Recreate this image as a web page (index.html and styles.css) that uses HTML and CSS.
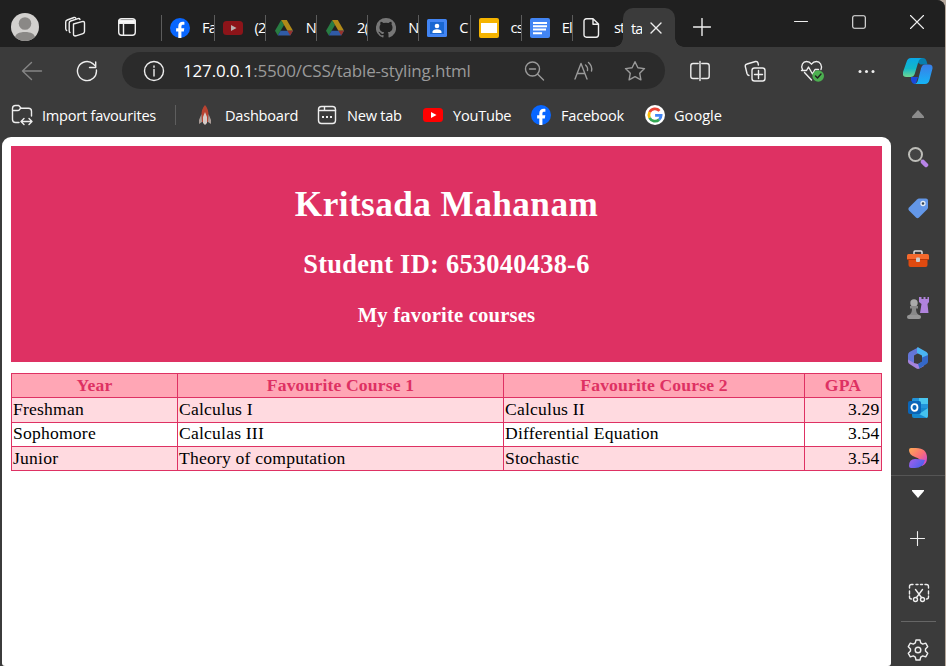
FILE: index.html
```html
<!DOCTYPE html>
<html lang="en">
<head>
<meta charset="utf-8">
<title>table-styling</title>
<link rel="stylesheet" href="styles.css">
</head>
<body>
<svg class="defs" width="0" height="0">
  <symbol id="facebook" viewBox="0 0 20 20"><circle cx="10" cy="10" r="10" fill="#0866ff"/><path d="M8.3 20v-6.600H6.100v-3.100h2.200V8.600c0-3.400 1.600-4.900 4.600-4.900.6 0 1.200.1 1.500.2v2.800h-1c-1.500 0-2 .6-2 2v1.600h2.900l-.5 3.100h-2.400V20z" fill="#fff"/></symbol>
  <symbol id="drive" viewBox="0 0 20 20"><path d="M7.200 2h5.600L10 7z" fill="#176b3a"/><path d="M7.200 2 1 12.800l2.800 4.700L10 7z" fill="#287c42"/><path d="M7.200 2h5.600L19 12.800h-5.600z" fill="#b18a18"/><path d="M6.600 12.800H19l-2.800 4.700H3.800z" fill="#305ba6"/><path d="M13.400 12.800H19l-2.800 4.700z" fill="#96332c"/></symbol>
</svg>
<div class="browser">
  <header class="tabstrip">
    <div class="tools-left">
      <svg class="avatar" viewBox="0 0 28 28"><clipPath id="face"><circle cx="14" cy="14" r="14"/></clipPath><g clip-path="url(#face)"><path fill="#d2d0ce" d="M0 0h28v28H0z"/><circle cx="14" cy="10.500" r="6.300" fill="#8a8886"/><path d="M4 28v-3c0-4 4-6 10-6s10 2 10 6v3z" fill="#8a8886"/></g></svg>
      <svg class="spaces line" viewBox="0 0 22 22"><path d="M9.500 8 18 5.600q2.500-.6 2.500 1.500v8.500q0 1.500-1.500 2l-7 2.200q-2.500.6-2.500-1.500zM6 16.500q-.8-.4-.8-2V7q0-1.400 1.500-2l7.300-2.400q1.500-.4 2 .8M2.700 14.500q-1-.5-1-2V6q0-1.500 1.500-2L10 1.500q1.200-.3 1.700.5"/></svg>
      <svg class="vtabs line" viewBox="0 0 20 20"><rect x="1.700" y="1.700" width="16.600" height="16.600" rx="3"/><path d="M2 3.500h16v2.800H2z" fill="#fff"/><path d="M6.500 6v12"/></svg>
    </div>
    <nav class="tabs">
      <div class="tab"><svg viewBox="0 0 20 20"><use href="#facebook"/></svg><span>Fa</span></div>
      <div class="tab"><svg viewBox="0 0 20 20"><rect y="3" width="20" height="14" rx="3.500" fill="#8c1419"/><path d="m8 7 5.500 3L8 13z" fill="#b9b0b0"/></svg><span>(2</span></div>
      <div class="tab"><svg viewBox="0 0 20 20"><use href="#drive"/></svg><span>N</span></div>
      <div class="tab"><svg viewBox="0 0 20 20"><use href="#drive"/></svg><span>2(</span></div>
      <div class="tab"><svg viewBox="0 0 20 20"><path fill="#777" d="M10 0a10 10 0 0 0-3.200 19.500c.5.1.7-.2.700-.5v-1.900c-2.600.5-3.300-.6-3.500-1.200-.2-.4-.7-1.200-1.100-1.500-.4-.2-.9-.7 0-.7.800 0 1.400.8 1.600 1.100 1 1.600 2.400 1.200 3 .9.1-.7.400-1.200.7-1.400-2.300-.3-4.700-1.200-4.700-5 0-1.100.4-2 1-2.700-.1-.3-.5-1.300.1-2.700 0 0 .9-.3 2.800 1.100a9.500 9.500 0 0 1 5.200 0C14.500 3.600 15.400 3.900 15.400 3.900c.6 1.400.2 2.400.1 2.700.6.700 1 1.600 1 2.700 0 3.900-2.400 4.700-4.700 5 .4.300.7.9.7 1.900V19c0 .3.200.6.700.5A10 10 0 0 0 10 0z"/></svg><span>N</span></div>
      <div class="tab"><svg viewBox="0 0 20 20"><rect y="1" width="20" height="18" rx="1.500" fill="#4285f4"/><rect x="3" y="4" width="14" height="12" fill="#1967d2"/><circle cx="10" cy="8" r="2.300" fill="#fff"/><path d="M5.500 15v-1.200c0-1.700 2-2.600 4.500-2.600s4.500.9 4.500 2.600V15z" fill="#fff"/></svg><span>C</span></div>
      <div class="tab"><svg viewBox="0 0 20 20"><rect width="20" height="20" rx="2" fill="#f5b400"/><path d="M2 5h16v10H2z" fill="#fff"/></svg><span>cs</span></div>
      <div class="tab"><svg viewBox="0 0 20 20"><rect width="20" height="20" rx="2" fill="#4285f4"/><path d="M3 4h14v2H3zm0 3.300h14v2H3zm0 3.300h13v2H3zm0 3.600h9v2H3z" fill="#fff"/></svg><span>El</span></div>
      <div class="tab last"><svg class="line" viewBox="0 0 20 20"><path d="M4.500.8H11l5.500 5.200v10.800q0 2.400-2.400 2.400H4.400Q2 19.200 2 16.800V3.200Q2 .8 4.500.8zM11 1v5.200h5"/></svg><span>st</span></div>
      <div class="tab-active"><span>ta</span><svg class="line" viewBox="0 0 12 12"><path d="m1 1 10 10M11 1 1 11"/></svg></div>
    </nav>
    <svg class="newtab line" viewBox="0 0 18 18"><path d="M9 .5v17M.5 9h17"/></svg>
    <div class="window-controls">
      <svg class="line thin" viewBox="0 0 14 14"><path d="M.5 6.500h13"/></svg>
      <svg class="line thin" viewBox="0 0 14 14"><rect x=".7" y=".7" width="12.600" height="12.600" rx="1.800"/></svg>
      <svg class="line thin" viewBox="0 0 14 14"><path d="m.5.5 13 13m0-13-13 13"/></svg>
    </div>
  </header>

  <div class="toolbar">
    <div class="tool"><svg class="line dim" viewBox="0 0 22 22"><path d="M20.500 11h-19M10.500 2.500 1.500 11l9 8.500"/></svg></div>
    <div class="tool"><svg class="line" viewBox="0 0 22 22"><path d="M20.400 10a9.500 9.500 0 1 1-3.200-6.100L19.500 6M13.500 7.500h6.200V2"/></svg></div>
    <div class="address">
      <svg class="line" viewBox="0 0 22 22"><circle cx="11" cy="11" r="9.500"/><path d="M11 9.500v6.500M11 6v1.200"/></svg>
      <span class="url"><b>127.0.0.1</b>:5500/CSS/table-styling.html</span>
      <svg class="line grey" viewBox="0 0 22 22"><circle cx="9.500" cy="9" r="7"/><path d="m14.500 14 6 6M6.500 9h6"/></svg>
      <svg class="line grey read" viewBox="0 0 22 22"><path d="m2 19 6-15.500L14 19M4.200 13.500h7.600M12.500 5q2.500 2 2 5.500M15.500 2.500q4 3.500 3 8.500"/></svg>
      <svg class="line grey" viewBox="0 0 22 22"><path d="m11 1.700 2.900 6 6.600.9-4.800 4.600 1.200 6.600-5.900-3.200-5.900 3.200 1.200-6.600-4.800-4.600 6.600-.9z"/></svg>
    </div>
    <div class="actions">
      <svg class="line" viewBox="0 0 22 22"><path d="M9.200 3.500H4Q1.800 3.500 1.800 5.700v10.600Q1.800 18.500 4 18.500h5.200M12.800 3.500H18q2.200 0 2.200 2.200v10.600q0 2.200-2.200 2.200h-5.200M11 1.500v19"/></svg>
      <svg class="line" viewBox="0 0 22 22"><rect x="8" y="8" width="13" height="13" rx="2.500"/><path d="M14.500 10.500v8M10.500 14.500h8M5 15.500q-1.500-.2-2-2L1.300 6.500Q1 4.500 3 4l8.500-2.500q2-.4 2.500 1.500l.4 2"/></svg>
      <svg class="line" viewBox="0 0 24 24"><path d="M2.500 10.500C.5 6.500 3 2.500 6.500 2.500q3 0 5 2.700 2-2.700 5-2.700c3.500 0 6 4 4.500 8M4.500 13.500 11.500 21M1.500 11.500h5L8.500 8l4 7 2.500-4.500h3.500"/><circle cx="18.200" cy="17" r="5.800" fill="#4caf50" stroke="none"/><path d="m15.500 17 2 2 3.500-4" stroke="#202020"/></svg>
      <svg viewBox="0 0 20 20" fill="#eee"><circle cx="3" cy="10.500" r="1.500"/><circle cx="9.500" cy="10.500" r="1.500"/><circle cx="16" cy="10.500" r="1.500"/></svg>
    </div>
    <svg class="copilot" viewBox="0 0 30 28"><defs><linearGradient id="cp1" x2="0" y2="1"><stop stop-color="#0aa7e6"/><stop offset=".55" stop-color="#12b8c8"/><stop offset="1" stop-color="#70d790"/></linearGradient><linearGradient id="cp2" x2="0" y2="1"><stop stop-color="#3b7de8"/><stop offset="1" stop-color="#15b4f6"/></linearGradient></defs><path d="M15 1h5q2.500 0 3.500 3l1 3.500h-7L14 5z" fill="#087fae"/><path d="M8 20h7l-1 3q-1 4-2 4-3 0-4-4z" fill="#1a48dc"/><path d="M8 1h12q-3.500 0-4.700 4l-3.600 12q-1 3-4.200 3H3q-4 0-3-5L3.500 5q1-4 4.500-4z" fill="url(#cp1)"/><path d="M22 7.500h4q4 0 3.500 4L26.500 23q-1 4-4.500 4H11q3 0 4-4l3-11.500q1-4 4-4z" fill="url(#cp2)"/></svg>
  </div>

  <div class="workspace">
    <main class="content">
      <nav class="bookmarks">
        <a class="import"><svg class="line" viewBox="0 0 22 22"><path d="M8 18.500H4.500Q1.500 18.500 1.500 15.500V4.500q0-3 3-3h3.200l2.500 2.700h7.300q3 0 3 3V12M1.500 6.500h5q1.500 0 2.200-1.200l1-1.100M10.500 17.500h10M13 14.500l-3 3 3 3M18 14.500l3 3-3 3"/></svg><span>Import favourites</span></a>
        <a class="dashboard"><svg viewBox="0 0 20 20"><path d="M10 0q4 4 3.500 12v5h-7v-5Q6 4 10 0z" fill="#b94331"/><path d="m6.500 9-2.500 6v4l3-2zm7 0 2.500 6v4l-3-2z" fill="#a99c97"/><path d="m10 7 2 5v6l-2 2-2-2v-6z" fill="#d6cbc7"/></svg><span>Dashboard</span></a>
        <a class="new"><svg class="line" viewBox="0 0 20 20"><rect x="1.500" y="1.500" width="17" height="17" rx="3"/><path d="M2 5.500h5.500V2M7.500 5.500h11"/><path d="M5 11h2v2H5zm4 0h2v2H9zm4 0h2v2h-2z" fill="#eee" stroke="none"/></svg><span>New tab</span></a>
        <a class="youtube"><svg viewBox="0 0 20 20"><rect y="3" width="20" height="14" rx="3.500" fill="#f00"/><path d="m8 7 5.500 3L8 13z" fill="#fff"/></svg><span>YouTube</span></a>
        <a class="fb"><svg viewBox="0 0 20 20"><use href="#facebook"/></svg><span>Facebook</span></a>
        <a class="google"><svg viewBox="0 0 20 20"><circle cx="10" cy="10" r="10" fill="#fff"/><g fill="none" stroke-width="2.800"><path d="M14.500 5.900A6.100 6.100 0 0 0 4.600 7.200" stroke="#ea4335"/><path d="M4.600 7.200a6.100 6.100 0 0 0 0 5.600" stroke="#fbbc05"/><path d="M4.600 12.800a6.100 6.100 0 0 0 9.500 1.800" stroke="#34a853"/><path d="M14.100 14.600q2-1.600 2-4.300h-6" stroke="#4285f4"/></g></svg><span>Google</span></a>
      </nav>
      <article class="page">
        <section class="banner">
          <h1>Kritsada Mahanam</h1>
          <h2>Student ID: 653040438-6</h2>
          <h3>My favorite courses</h3>
        </section>
        <table>
          <colgroup><col class="c-year"><col class="c-one"><col class="c-two"><col></colgroup>
          <thead><tr><th>Year</th><th>Favourite Course 1</th><th>Favourite Course 2</th><th>GPA</th></tr></thead>
          <tbody>
            <tr><td>Freshman</td><td>Calculus I</td><td>Calculus II</td><td>3.29</td></tr>
            <tr><td>Sophomore</td><td>Calculas III</td><td>Differential Equation</td><td>3.54</td></tr>
            <tr><td>Junior</td><td>Theory of computation</td><td>Stochastic</td><td>3.54</td></tr>
          </tbody>
        </table>
      </article>
    </main>

    <aside class="sidebar">
      <div class="cell up"><svg viewBox="0 0 12 8"><path d="M6 0 12 6.500V8H0V6.500z" fill="#8c8c8c"/></svg></div>
      <div class="apps">
        <div class="cell"><svg viewBox="0 0 22 22"><path d="m14 14 2.500 2.500" stroke="#999" stroke-width="2"/><path d="m16 16 3 3" stroke="#b884e8" stroke-width="4.500" stroke-linecap="round"/><circle cx="8.500" cy="8.500" r="6.500" fill="#444" stroke="#bdbdb8" stroke-width="2"/></svg></div>
        <div class="cell"><svg viewBox="0 0 22 22"><path d="M12 1.500h7q2 0 2 2v7q0 1-1 2l-8 8q-1.500 1.500-3 0l-7-7q-1.500-1.500 0-3l8-8q1-1 2-1z" fill="#6397e8"/><circle cx="16" cy="6.500" r="2" fill="#345" stroke="#e8eef5" stroke-width="1.300"/></svg></div>
        <div class="cell"><svg viewBox="0 0 22 22"><path d="M7 7V4q0-1 1-1h6q1 0 1 1v3" fill="none" stroke="#ddd" stroke-width="1.500"/><path d="M1.500 10h19v7q0 2-2 2h-15q-2 0-2-2z" fill="#df4a10"/><rect y="6" width="22" height="6" rx="1.500" fill="#f4692c"/><path d="M0 11.500h22" stroke="#b9380b"/><rect x="9" y="9.500" width="4" height="4.500" rx="1" fill="#ccc"/></svg></div>
        <div class="cell"><svg viewBox="0 0 22 22"><path d="M12 0h2.500v2h2V0h2v2h2V0H22v5l-1.500 2 1 9H13l1.500-9L12 5z" fill="#b083dc"/><circle cx="7" cy="6" r="3.700" fill="#aaa"/><path d="M3 9h8v2.500H9q0 5 3 6.500H2q3-1.500 3-6.500H3z" fill="#888"/><rect y="18" width="14" height="4" rx="2" fill="#969696"/></svg></div>
        <div class="cell"><svg viewBox="0 0 22 22"><path d="M11 .5 2.500 5Q1 6 1 8v6.500l6 2V8.500L15 4z" fill="#6476d8"/><path d="m10 .8 1-.5 8.500 4.700Q21 6 21 8v5l-6-2V8.500L10 6z" fill="#4ab5f2"/><path d="M1 12.500 7 16l4 1 5-2.500 1 4.500-4.500 2.500q-1.500.8-3 0L2.500 17Q1 16 1 14.500z" fill="#a583dd"/><path d="m21 8-6 2.500v4L11 17l1.500 4.500L19.500 17q1.500-1 1.500-2.500z" fill="#3468c8"/></svg></div>
        <div class="cell"><svg viewBox="0 0 22 22"><path d="M6 1h13q2 0 2 2v9H5V3q0-2 1-2z" fill="#2294da"/><path d="M12 1h9v6h-9z" fill="#4ac6ef"/><path d="M5 11h16v7q0 3-2 3H7q-2 0-2-2z" fill="#1689cf"/><path d="m21 11-9 6 8 4q1-1 1-3z" fill="#45c2ed"/><rect x="1" y="4" width="13" height="13" rx="2" fill="#0a65b8"/><ellipse cx="7.500" cy="10.500" rx="3" ry="3.300" fill="none" stroke="#fff" stroke-width="1.800"/></svg></div>
        <div class="cell"><svg viewBox="0 0 22 22"><defs><linearGradient id="d1" x2="1" y2="1"><stop stop-color="#ffac54"/><stop offset=".5" stop-color="#fb6f76"/><stop offset="1" stop-color="#be3ced"/></linearGradient><linearGradient id="d2" x2="1" y2=".5"><stop stop-color="#a65ee9"/><stop offset="1" stop-color="#4b62ee"/></linearGradient></defs><path d="M2 3q0-2 2-2h5q11 0 11 10 0 6-5 8 0-7-7-9-6-2-6-7z" fill="url(#d1)"/><path d="M2 19q0-7 6-7 3 0 10 1-2 8-10 8H4q-2 0-2-2z" fill="url(#d2)"/></svg></div>
      </div>
      <div class="cell down"><svg viewBox="0 0 12 8"><path d="M0 0h12v1L6 8 0 1z" fill="#fff"/></svg></div>
      <div class="cell plus"><svg class="line thin" viewBox="0 0 22 22"><path d="M10.500 3.500v14M3.500 10.500h14"/></svg></div>
      <div class="cell shot"><svg class="line" viewBox="0 0 22 22"><path d="M1.500 6V4.500q0-2 2-2H5M8 2.500h2M12.500 2.500h2M17 2.500h1.500q2 0 2 2V6M20.500 9v3M1.500 9v3M1.500 14v1q0 2 2 2M20.500 14v1q0 2-2 2M7.500 7.500l6 8M14.500 7.500l-6 8"/><circle cx="7.500" cy="17.500" r="2"/><circle cx="14.500" cy="17.500" r="2"/></svg></div>
      <div class="cell settings"><svg class="line" viewBox="0 0 22 22"><path d="M9 1h4l.7 2.900 2 1.200 3-.9 2 3.500L18.500 10v2l2.200 2.300-2 3.500-3-.9-2 1.200-.7 2.900H9l-.7-2.900-2-1.200-3 .9-2-3.500L3.500 12v-2L1.300 7.700l2-3.500 3 .9 2-1.200z"/><circle cx="11" cy="11" r="2.800"/></svg></div>
    </aside>
  </div>
</div>
</body>
</html>
```
FILE: styles.css
```css
* { box-sizing: border-box; }
body { margin: 0; background: #b5a89c; overflow: hidden; }
svg { display: block; flex: none; width: 22px; height: 22px; }
.defs { position: absolute; width: 0; height: 0; }
.line { fill: none; stroke: #eee; stroke-width: 1.4; stroke-linecap: round; stroke-linejoin: round; }
.line.dim { stroke: #858585; }
.line.grey { stroke: #9a9a9a; }
.line.thin { stroke-width: 1.1; }

.browser {
  width: 945px; height: 666px;
  display: flex; flex-direction: column;
  background: #3b3b3b; color: #fff;
  border-top-right-radius: 8px;
  overflow: hidden;
  font: 14.6px/20px "Open Sans", "Noto Sans", sans-serif;
  letter-spacing: -.25px;
}

/* Tab strip */
.tabstrip { flex: none; height: 47px; display: flex; background: #202020; }
.tools-left { width: 161px; display: flex; align-items: center; padding: 7px 0 0 11px; }
.avatar { width: 28px; height: 28px; }
.spaces { margin-left: 25px; }
.vtabs { width: 20px; height: 20px; margin-left: 31px; }
.tabs { display: flex; align-items: flex-start; padding-top: 15px; }
.tab {
  width: 51.2px; height: 26px; padding-left: 8px;
  display: flex; align-items: center; gap: 12px;
  border-right: 1px solid #5c5c5c; overflow: hidden;
}
.tab:first-child { border-left: 1px solid #5c5c5c; width: 53.6px; }
.tab.last { border: 0; width: 50px; padding-left: 9px; }
.tab svg { width: 20px; height: 20px; }
.tab span, .tab-active span { letter-spacing: -.8px; white-space: nowrap; }
.tab span { line-height: 24px; align-self: flex-start; }
.tab-active {
  position: relative; width: 52px; height: 39px; margin-top: -7px;
  display: flex; align-items: center; gap: 8px; padding-left: 8px;
  border-radius: 10px 10px 0 0; background: #3b3b3b;
}
.tab-active::before, .tab-active::after {
  content: ""; position: absolute; bottom: 0; width: 9px; height: 9px;
}
.tab-active::before { left: -9px; background: radial-gradient(circle at 0 0, #202020 8.5px, #3b3b3b 9px); }
.tab-active::after { right: -9px; background: radial-gradient(circle at 100% 0, #202020 8.5px, #3b3b3b 9px); }
.tab-active span { width: 11px; overflow: hidden; }
.tab-active svg { width: 12px; height: 12px; }
.newtab { width: 18px; height: 18px; margin: 18px 0 0 18px; }
.window-controls { display: flex; gap: 44px; margin: 15px 21px 0 auto; }
.window-controls svg { width: 14px; height: 14px; }

/* Toolbar */
.toolbar { flex: none; height: 48px; display: flex; align-items: center; padding: 0 0 1px 4px; }
.tool { width: 55px; display: flex; justify-content: center; }
.tool + .tool { width: 56px; }
.address {
  width: 543px; height: 37px; margin-left: 7px; padding-left: 21px;
  display: flex; align-items: center;
  border-radius: 19px; background: #2b2b2b;
}
.url { width: 340px; margin-left: 18px; color: #9a9a9a; font-size: 17px; line-height: 24px; letter-spacing: -.17px; white-space: nowrap; }
.url b { color: #fff; font-weight: 400; }
.address .grey + .grey { margin-left: 28px; }
.address .read + .grey { margin-left: 29px; }
.actions { display: flex; align-items: center; width: 188px; margin-left: 24px; justify-content: space-between; }
.actions svg:nth-child(3) { width: 24px; height: 24px; }
.actions svg:nth-child(4) { width: 20px; height: 20px; }
.copilot { width: 30px; height: 28px; margin-left: 26px; }

/* Favourites and web page */
.workspace { flex: 1; min-height: 0; display: flex; }
.content { width: 891px; display: flex; flex-direction: column; }
.bookmarks { flex: none; height: 42px; display: flex; align-items: center; padding: 0 0 3px 11px; }
.bookmarks a { display: flex; align-items: center; gap: 10px; white-space: nowrap; }
.bookmarks svg { width: 20px; height: 20px; }
.bookmarks .import { width: 165px; height: 20px; gap: 9px; border-right: 1px solid #5e5e5e; }
.bookmarks .import svg { width: 22px; height: 22px; }
.dashboard { width: 122px; margin-left: 19px; }
.new { width: 106px; }
.youtube { width: 108px; }
.fb { width: 114px; }
.bookmarks .google { letter-spacing: 0; gap: 9px; }

.page {
  flex: 1; margin-left: 2px; width: 889px; padding: 9px 9px 0;
  background: #fff; color: #000; border-radius: 9px 9px 3px 3px;
  font: 17.6px/20px "Liberation Serif", serif;
  letter-spacing: 0;
}
.banner { height: 216px; padding-top: 39px; background: #de3163; color: #fff; text-align: center; }
h1, h2, h3 { margin: 0; }
h1 { font-size: 35.2px; line-height: 40px; letter-spacing: .45px; }
h2 { margin-top: 24px; font-size: 26.4px; line-height: 30px; letter-spacing: .27px; }
h3 { margin-top: 24px; font-size: 20.6px; line-height: 24px; letter-spacing: .2px; }
table { width: 871px; margin-top: 11px; border-collapse: collapse; table-layout: fixed; }
.c-year { width: 166px; }
.c-one { width: 326px; }
.c-two { width: 301px; }
th, td { height: 24.3px; padding: 0 1.5px 2px; border: 1px solid #de3163; text-align: left; letter-spacing: .2px; }
td { padding-left: 1px; }
th { background: #ffa6b5; color: #de3163; text-align: center; letter-spacing: .15px; }
tbody tr:nth-child(odd) { background: #ffdae0; }
td:last-child { text-align: right; }

/* Sidebar */
.sidebar { width: 54px; }
.cell { height: 50px; display: flex; align-items: center; justify-content: center; }
.up { height: 37px; }
.up svg, .down svg { width: 12px; height: 8px; }
.apps { height: 344px; border-bottom: 1px solid #555; }
.apps .cell:nth-child(n+2) { padding-top: 2px; }
.apps .cell:nth-child(3) { padding-top: 4px; }
.apps .cell:nth-child(7) { padding-top: 1px; }
.down { height: 36px; }
.plus { height: 53px; }
.shot { height: 57px; width: 35px; margin-left: 10px; border-bottom: 1px solid #666; }
.settings { height: 56px; }
```
